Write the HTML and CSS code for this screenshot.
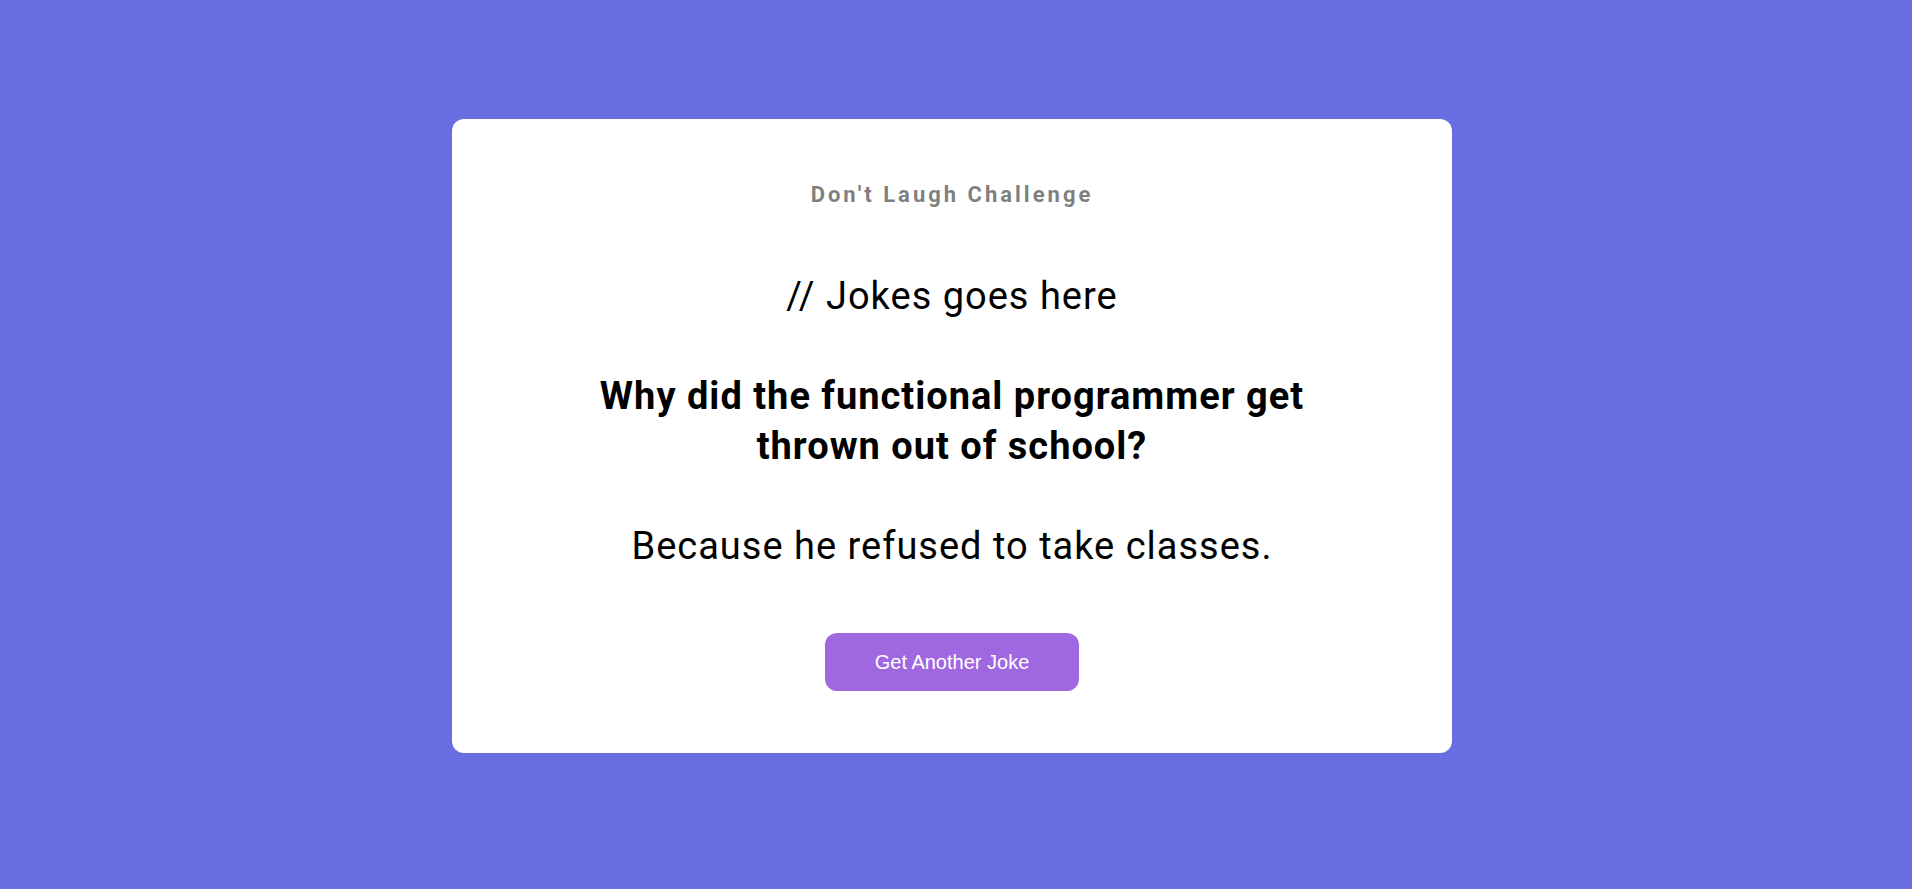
FILE: index.html
```html
<!DOCTYPE html>
<html lang="en">
<head>
<meta charset="utf-8">
<meta name="viewport" content="width=device-width, initial-scale=1">
<title>Don't Laugh Challenge</title>
<link rel="stylesheet" href="styles.css">
</head>
<body>
<main class="container">
  <h3 class="title">Don't Laugh Challenge</h3>
  <div class="joke">
    <p>// Jokes goes here</p>
    <p><strong>Why did the functional programmer get thrown out of school?</strong></p>
    <p>Because he refused to take classes.</p>
  </div>
  <button class="btn" type="button">Get Another Joke</button>
</main>
</body>
</html>
```
FILE: styles.css
```css
* {
  box-sizing: border-box;
}

body {
  background-color: #686de0;
  font-family: Roboto, sans-serif;
  display: flex;
  align-items: center;
  justify-content: center;
  min-height: 100vh;
  margin: 0;
  padding: 0 8px 18px 0;
}

.container {
  background-color: #fff;
  border-radius: 12px;
  display: flex;
  flex-direction: column;
  align-items: center;
  gap: 62px;
  padding: 62px 20px;
  text-align: center;
  max-width: 100%;
  width: 1000px;
}

.title {
  margin: 0;
  color: #000;
  opacity: 0.5;
  font-size: 22px;
  font-weight: 700;
  letter-spacing: 3px;
  line-height: 28px;
}

.joke {
  display: flex;
  flex-direction: column;
  gap: 50px;
  font-size: 38px;
  letter-spacing: 1px;
  line-height: 50px;
  max-width: 750px;
}

.joke p {
  margin: 0;
}

.btn {
  background-color: #9f68e0;
  color: #fff;
  border: 0;
  border-radius: 12px;
  padding: 18px 50px;
  font-family: "Liberation Sans", Arial, sans-serif;
  font-size: 20px;
  line-height: 22px;
  cursor: pointer;
}
```
